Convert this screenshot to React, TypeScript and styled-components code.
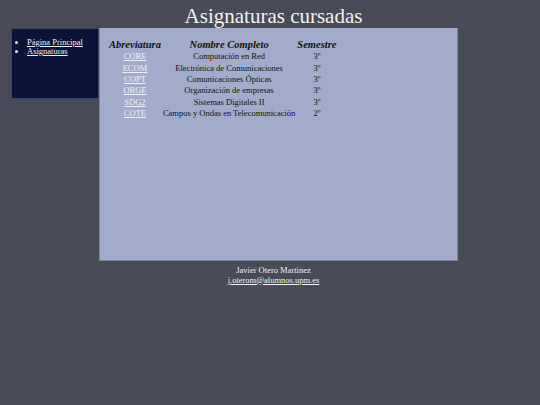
import React from "react";
import styled, { createGlobalStyle } from "styled-components";

const Global = createGlobalStyle`
  html, body { margin: 0; padding: 0; background: #484b58; }
  body { font-family: "Liberation Serif", "Times New Roman", serif; color: #f0f0f0; }
`;

const Page = styled.div`
  width: 540px;
  min-height: 405px;
  padding: 0 4px 0 11px;
  box-sizing: border-box;
`;

const Title = styled.h1`
  margin: 0;
  padding: 5px 0 0 0;
  height: 23px;
  font-size: 21px;
  font-weight: normal;
  line-height: 22px;
  text-align: center;
  color: #f2f2f2;
`;

const Row = styled.div`
  display: flex;
  align-items: flex-start;
`;

const Nav = styled.nav`
  width: 88px;
  height: 71px;
  box-sizing: border-box;
  background: #0b1339;
  border: 1px solid #3d4258;
  padding: 9px 0 0 0;
`;

const NavList = styled.ul`
  margin: 0;
  padding: 0 0 0 15px;
  font-size: 8.5px;
  line-height: 9px;
  list-style: disc;
  color: #e8e8ee;
`;

const NavLink = styled.a`
  color: #eef0f8;
  text-decoration: underline;
`;

const Main = styled.main`
  width: 359px;
  height: 233px;
  box-sizing: border-box;
  background: #a3abcb;
  border: 1px solid #7e859f;
  border-top: none;
  padding: 9px 0 0 8px;
`;

const Table = styled.table`
  border-collapse: collapse;
  color: #111;
`;

const Th = styled.th`
  font-size: 10.5px;
  font-style: italic;
  font-weight: bold;
  padding: 0 1px;
  height: 14px;
  line-height: 13px;
  text-align: center;
`;

const Td = styled.td`
  font-size: 8.5px;
  padding: 0 1px;
  height: 11.4px;
  line-height: 11px;
  text-align: center;
`;

const CodeLink = styled.a`
  color: #eef1fa;
  text-decoration: underline;
`;

const Footer = styled.footer`
  text-align: center;
  padding-top: 5px;
  font-size: 8.5px;
  line-height: 9.5px;
  color: #f0f0f0;
`;

const Mail = styled.a`
  color: #f0f2fa;
  text-decoration: underline;
`;

const rows = [
  ["CORE", "Computación en Red", "3º"],
  ["ECOM", "Electrónica de Comunicaciones", "3º"],
  ["COPT", "Comunicaciones Ópticas", "3º"],
  ["ORGE", "Organización de empresas", "3º"],
  ["SDG2", "Sistemas Digitales II", "3º"],
  ["COTE", "Campos y Ondas en Telecomunicación", "2º"],
];

export default function App() {
  return (
    <>
      <Global />
      <Page>
        <Title>Asignaturas cursadas</Title>
        <Row>
          <Nav>
            <NavList>
              <li><NavLink href="#">Página Principal</NavLink></li>
              <li><NavLink href="#">Asignaturas</NavLink></li>
            </NavList>
          </Nav>
          <Main>
            <Table>
              <thead>
                <tr>
                  <Th>Abreviatura</Th>
                  <Th>Nombre Completo</Th>
                  <Th>Semestre</Th>
                </tr>
              </thead>
              <tbody>
                {rows.map(([c, n, s]) => (
                  <tr key={c}>
                    <Td><CodeLink href="#">{c}</CodeLink></Td>
                    <Td>{n}</Td>
                    <Td>{s}</Td>
                  </tr>
                ))}
              </tbody>
            </Table>
          </Main>
        </Row>
        <Footer>
          Javier Otero Martinez
          <br />
          <Mail href="#">j.oterom@alumnos.upm.es</Mail>
        </Footer>
      </Page>
    </>
  );
}
